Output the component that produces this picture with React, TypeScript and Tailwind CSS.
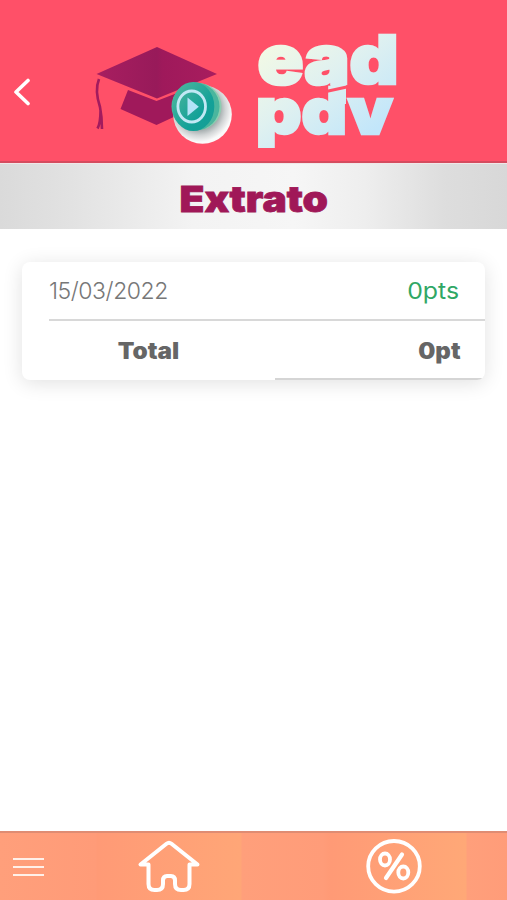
const BackIcon = () => (
  <svg viewBox="0 0 18 28" className="h-7 w-[18px]" fill="none">
    <path
      d="M15 2.5 3 14 15 25.5"
      stroke="#fff"
      strokeWidth="3.6"
      strokeLinecap="round"
      strokeLinejoin="round"
    />
  </svg>
);

const Logo = () => (
  <svg viewBox="90 25 315 130" className="h-[130px] w-[315px]">
    <defs>
      <linearGradient id="cap" x1="0" x2="1">
        <stop offset="0" stopColor="#a81e60" />
        <stop offset="0.5" stopColor="#981a5a" />
        <stop offset="0.55" stopColor="#9f195b" />
        <stop offset="1" stopColor="#a81d5e" />
      </linearGradient>
      <linearGradient id="disc" x1="0" y1="0" x2="1" y2="1">
        <stop offset="0" stopColor="#54b89e" />
        <stop offset="0.65" stopColor="#13a198" />
        <stop offset="1" stopColor="#159d95" />
      </linearGradient>
      <radialGradient
        id="plate"
        gradientUnits="userSpaceOnUse"
        cx="199"
        cy="109"
        r="33"
      >
        <stop offset="0.6" stopColor="#9aa3a4" />
        <stop offset="0.8" stopColor="#d2d5d6" />
        <stop offset="1" stopColor="#fafafa" />
      </radialGradient>
      <linearGradient
        id="word"
        gradientUnits="userSpaceOnUse"
        x1="275"
        y1="40"
        x2="355"
        y2="145"
      >
        <stop offset="0" stopColor="#f2f9e5" />
        <stop offset="0.45" stopColor="#e0f1f0" />
        <stop offset="1" stopColor="#c2e6fa" />
      </linearGradient>
    </defs>

    <path d="M96.5 74 157 47l60 27-60 24.5z" fill="url(#cap)" />
    <path d="m128 90 28.5 11L185 90l8 18-36.5 17-36-16z" fill="#a0195b" />
    <path
      d="M99 79c-4 10-2 19 1 28 1 5 2 13 2 22M100.500 111c0 8-.5 13-3 17.500"
      fill="none"
      stroke="#a21b5e"
      strokeWidth="2.6"
    />

    <circle cx="202.500" cy="114.500" r="29.300" fill="url(#plate)" />
    <circle cx="198" cy="106.500" r="23.500" fill="#8bceb0" />
    <circle cx="195.500" cy="106.500" r="24" fill="#4ab69e" />
    <ellipse cx="193.300" cy="106.500" rx="21" ry="24.500" fill="url(#disc)" />
    <ellipse
      cx="191.700"
      cy="106.500"
      rx="13.800"
      ry="15.500"
      fill="none"
      stroke="#c1e8f4"
      strokeWidth="2.8"
    />
    <path d="M187.500 97.500v18.500l11.300-9.200z" fill="#b5e3f8" />

    <g
      fill="url(#word)"
      stroke="url(#word)"
      strokeWidth="2.6"
      fontFamily="Inter, sans-serif"
      fontWeight="900"
    >
      <text x="257.500" y="84.300" fontSize="68" textLength="141" lengthAdjust="spacingAndGlyphs">
        ead
      </text>
      <text x="256" y="133.700" fontSize="64" textLength="136.500" lengthAdjust="spacingAndGlyphs">
        pdv
      </text>
      <path d="M330.500 80H346v24h-15.500z" stroke="none" />
    </g>
    <path d="m326 91.500 23-5" stroke="#ff5068" strokeWidth="3.200" />
  </svg>
);

const HomeIcon = () => (
  <svg viewBox="0 0 64 54" className="h-[54px] w-16" fill="none">
    <path
      d="M29.500 4.800 3.500 25.500h8V45q0 6 6 6h2.500q6 0 6-6v-3.500q0-4.500 4-4.500h4q4 0 4 4.500V45q0 6 6 6h2.500q6 0 6-6V25.500h8L34.500 4.800q-2.500-2-5 0z"
      stroke="#fff"
      strokeWidth="4"
      strokeLinejoin="round"
    />
  </svg>
);

const PercentIcon = () => (
  <svg viewBox="0 0 56 56" className="size-14" fill="none" stroke="#fff">
    <ellipse cx="28" cy="28.300" rx="25.800" ry="25.300" strokeWidth="3.8" />
    <ellipse cx="19" cy="21.500" rx="5" ry="6" strokeWidth="3.800" />
    <ellipse cx="37.300" cy="34.500" rx="5" ry="6" strokeWidth="3.800" />
    <path d="M36 16.500 20 40" strokeWidth="4.2" strokeLinecap="round" />
  </svg>
);

const Header = () => (
  <header className="flex h-[163px] items-start border-b-2 border-[#d54c5f] bg-[#ff5068]">
    <button className="ml-[13px] mt-[78px]" aria-label="Voltar">
      <BackIcon />
    </button>
    <div className="ml-[59px] mt-[25px]">
      <Logo />
    </div>
  </header>
);

const Statement = () => (
  <section className="mx-auto mt-[33px] h-[118px] w-[463px] rounded-lg bg-white shadow-[0_3px_20px_rgba(0,0,0,0.12)]">
    <div className="ml-[27px] flex h-[59px] items-center justify-between border-b-2 border-[#d8d8d8] pr-[26px] pt-[2px] text-[23px]">
      <span className="font-light tracking-[-0.45px] text-[#777]">
        15/03/2022
      </span>
      <span className="origin-right scale-x-[1.08] text-[#30a765]">0pts</span>
    </div>
    <div className="flex h-[59px] overflow-hidden rounded-b-lg text-[22.5px] font-black text-[#666]">
      <div className="flex w-[253px] items-center justify-center">
        <span className="scale-x-[1.08]">Total</span>
      </div>
      <div className="flex flex-1 items-center justify-end border-b-2 border-[#d5d5d5] pr-[24px] pt-[2px]">
        <span className="origin-right scale-x-[1.07]">0pt</span>
      </div>
    </div>
  </section>
);

const Footer = () => (
  <nav className="flex h-[69px] items-start border-t-2 border-[#df8c73] bg-[linear-gradient(90deg,#ff9f7b_0,#ff9b78_96px,#ff9a76_97px,#ffa677_241px,#ff9f7b_242px,#ff9c79_323px,#ff9a76_330px,#ffa877_466px,#ff9f7b_467px,#ff9c79_100%)]">
    <button
      className="ml-[13px] mt-[25px] flex w-[31px] flex-col gap-1.5"
      aria-label="Menu"
    >
      <span className="h-0.5 w-full bg-[#fff0e9]" />
      <span className="h-0.5 w-full bg-[#fff0e9]" />
      <span className="h-0.5 w-full bg-[#fff0e9]" />
    </button>
    <button className="ml-[93px] mt-[6px]" aria-label="Início">
      <HomeIcon />
    </button>
    <button className="ml-[165px] mt-[5px]" aria-label="Promoções">
      <PercentIcon />
    </button>
  </nav>
);

export default function App() {
  return (
    <div className="flex h-[900px] w-[507px] flex-col overflow-hidden bg-white font-['Inter',sans-serif]">
      <Header />
      <div className="flex h-[66px] items-center justify-center border-t border-[#f0e8e8] bg-[linear-gradient(90deg,#dadada_0%,#e2e2e2_14%,#f3f3f3_38%,#f6f6f6_58%,#eeeeee_72%,#dddddd_88%,#d8d8d8_100%)] pt-[5px]">
        <h1 className="scale-x-[1.13] text-[36px] font-black leading-none text-[#a01858] [-webkit-text-stroke:0.8px_#a01858]">
          Extrato
        </h1>
      </div>
      <main className="flex-1">
        <Statement />
      </main>
      <Footer />
    </div>
  );
}
